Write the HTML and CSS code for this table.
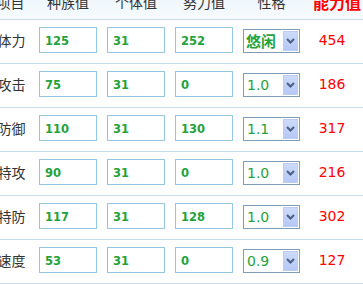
FILE: index.html
```html
<!DOCTYPE html>
<html lang="zh">
<head>
<meta charset="utf-8">
<link rel="stylesheet" href="styles.css">
</head>
<body>
<div class="table">
  <div class="row head">
    <div class="h label">项目</div>
    <div class="h">种族值</div>
    <div class="h">个体值</div>
    <div class="h">努力值</div>
    <div class="h">性格</div>
    <div class="h total">能力值</div>
  </div>
  <div class="row">
    <div class="label">体力</div>
    <div class="field">125</div>
    <div class="field">31</div>
    <div class="field">252</div>
    <div class="select"><span class="opt cjk">悠闲</span><span class="btn"><svg width="9" height="6" viewBox="0 0 9 6"><path d="M1 1 L4.5 4.5 L8 1" fill="none" stroke="#4b5f86" stroke-width="2"/></svg></span></div>
    <div class="value">454</div>
  </div>
  <div class="row">
    <div class="label">攻击</div>
    <div class="field">75</div>
    <div class="field">31</div>
    <div class="field">0</div>
    <div class="select"><span class="opt">1.0</span><span class="btn"><svg width="9" height="6" viewBox="0 0 9 6"><path d="M1 1 L4.5 4.5 L8 1" fill="none" stroke="#4b5f86" stroke-width="2"/></svg></span></div>
    <div class="value">186</div>
  </div>
  <div class="row">
    <div class="label">防御</div>
    <div class="field">110</div>
    <div class="field">31</div>
    <div class="field">130</div>
    <div class="select"><span class="opt">1.1</span><span class="btn"><svg width="9" height="6" viewBox="0 0 9 6"><path d="M1 1 L4.5 4.5 L8 1" fill="none" stroke="#4b5f86" stroke-width="2"/></svg></span></div>
    <div class="value">317</div>
  </div>
  <div class="row">
    <div class="label">特攻</div>
    <div class="field">90</div>
    <div class="field">31</div>
    <div class="field">0</div>
    <div class="select"><span class="opt">1.0</span><span class="btn"><svg width="9" height="6" viewBox="0 0 9 6"><path d="M1 1 L4.5 4.5 L8 1" fill="none" stroke="#4b5f86" stroke-width="2"/></svg></span></div>
    <div class="value">216</div>
  </div>
  <div class="row">
    <div class="label">特防</div>
    <div class="field">117</div>
    <div class="field">31</div>
    <div class="field">128</div>
    <div class="select"><span class="opt">1.0</span><span class="btn"><svg width="9" height="6" viewBox="0 0 9 6"><path d="M1 1 L4.5 4.5 L8 1" fill="none" stroke="#4b5f86" stroke-width="2"/></svg></span></div>
    <div class="value">302</div>
  </div>
  <div class="row">
    <div class="label">速度</div>
    <div class="field">53</div>
    <div class="field">31</div>
    <div class="field">0</div>
    <div class="select"><span class="opt">0.9</span><span class="btn"><svg width="9" height="6" viewBox="0 0 9 6"><path d="M1 1 L4.5 4.5 L8 1" fill="none" stroke="#4b5f86" stroke-width="2"/></svg></span></div>
    <div class="value">127</div>
  </div>
</div>
</body>
</html>
```
FILE: styles.css
```css
html, body {
  margin: 0;
  padding: 0;
  background: #fff;
  overflow: hidden;
}
body {
  width: 363px;
  height: 284px;
  font-family: "Noto Sans CJK SC", "DejaVu Sans", sans-serif;
  font-size: 14px;
  color: #333;
}
.table {
  margin-left: -10px;
  width: 374px;
}
.row {
  display: grid;
  grid-template-columns: 39px 58px 58px 58px 57px 44px;
  column-gap: 10px;
  height: 44px;
  box-sizing: border-box;
  padding-top: 7px;
  border-bottom: 1px solid #c9dcec;
  align-items: start;
}
.row.head {
  height: 20px;
  padding-top: 0;
  background: linear-gradient(#f0f7fc, #f6fafd);
  overflow: hidden;
}
.h {
  text-align: center;
  line-height: 14px;
  margin-top: -5px;
  white-space: nowrap;
}
.h.total {
  color: #f00;
  font-weight: bold;
  font-size: 16px;
  display: flex;
  justify-content: center;
  margin-left: 10px;
}
.label {
  text-align: center;
  padding-left: 4px;
  line-height: 26px;
  white-space: nowrap;
}
.h.label {
  line-height: 14px;
  padding-left: 2px;
}
.field {
  height: 26px;
  box-sizing: border-box;
  border: 1px solid #93c6e0;
  padding: 2px 5px 0;
  line-height: 22px;
  font-family: "DejaVu Sans", sans-serif;
  font-weight: bold;
  font-size: 11.5px;
  color: #1fa33c;
  background: #fff;
}
.select {
  margin-top: 2px;
  height: 24px;
  box-sizing: border-box;
  border: 1px solid #7f9db9;
  display: flex;
  align-items: stretch;
  padding: 1px;
  background: #fff;
}
.opt {
  flex: 1;
  padding-left: 2px;
  line-height: 20px;
  font-family: "DejaVu Sans", sans-serif;
  font-size: 14px;
  color: #1fa33c;
}
.opt.cjk {
  font-family: "Noto Sans CJK SC", sans-serif;
  font-weight: bold;
  font-size: 15px;
  padding-left: 1px;
}
.btn {
  width: 15px;
  box-sizing: border-box;
  border: 1px solid #bccdf4;
  background: linear-gradient(#cddaf9, #b5c8f6);
  display: flex;
  align-items: center;
  justify-content: center;
}
.value {
  text-align: center;
  line-height: 26px;
  font-family: "DejaVu Sans", sans-serif;
  font-size: 14px;
  color: #f00;
}
```
